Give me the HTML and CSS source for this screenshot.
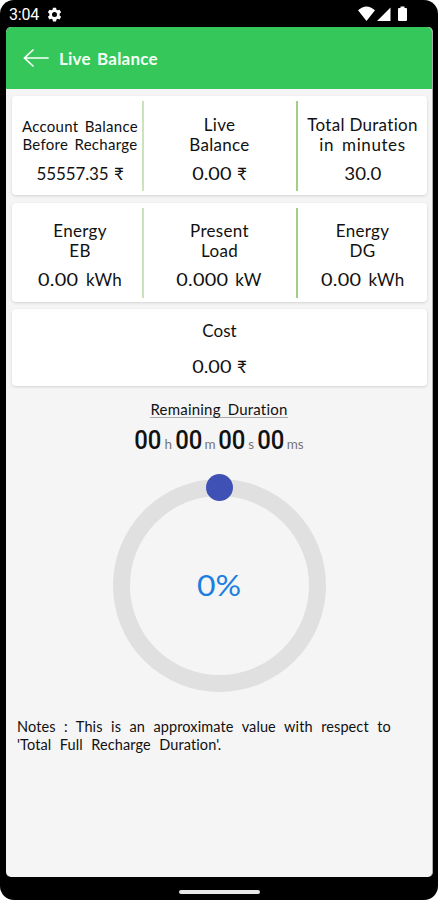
FILE: index.html
```html
<!DOCTYPE html>
<html lang="en">
<head>
<meta charset="utf-8">
<title>Live Balance</title>
<link rel="stylesheet" href="styles.css">
</head>
<body>
<div class="phone">
  <div class="status">
    <span class="clock">3:04</span>
    <svg class="gear" viewBox="0 0 24 24"><path fill="#fff" fill-rule="evenodd" d="M9.5 1h5l.6 3.2 2 1.100 3-1.100 2.500 4.200-2.400 2.200v2.800l2.400 2.200-2.500 4.200-3-1.100-2 1.100-.6 3.200h-5l-.6-3.200-2-1.100-3 1.100-2.500-4.200 2.400-2.200v-2.800L1.400 8.400l2.500-4.200 3 1.100 2-1.100zM12 8a4 4 0 1 0 0 8 4 4 0 0 0 0-8z"/></svg>
    <svg class="signals" viewBox="0 0 50 16"><path fill="#fff" d="M0 4.200Q8.500-3.400 17 4.200L8.500 15zM19 15 32.500 1.500V15zM40 3q0-1 1-1h1.500V.5h4V2H48q1 0 1 1v11q0 1-1 1h-7q-1 0-1-1z"/></svg>
  </div>
  <main class="screen">
    <header class="bar">
      <svg class="back" viewBox="0 0 26 20"><path d="M10 2 1.500 10l8.500 8M1.500 10H25" fill="none" stroke="#fff" stroke-width="1.700" stroke-linecap="round"/></svg>
      <h1>Live Balance</h1>
    </header>
    <section class="card trio">
      <div class="cell left"><p class="small">Account Balance<br>Before Recharge</p><p class="value amount">55557.35 ₹</p></div>
      <div class="cell mid"><p>Live<br>Balance</p><p class="value"><span class="wide">0.00</span> ₹</p></div>
      <div class="cell"><p>Total Duration<br><span class="minutes">in minutes</span></p><p class="value"><span class="wide minor">30.0</span></p></div>
    </section>
    <section class="card trio second">
      <div class="cell left"><p>Energy<br>EB</p><p class="value unit"><span class="wide">0.00</span> kWh</p></div>
      <div class="cell mid"><p>Present<br>Load</p><p class="value unit"><span class="wide">0.000</span> kW</p></div>
      <div class="cell"><p>Energy<br>DG</p><p class="value unit"><span class="wide">0.00</span> kWh</p></div>
    </section>
    <section class="card cost"><p>Cost</p><p class="value"><span class="wide">0.00</span> ₹</p></section>
    <h2><span>Remaining Duration</span></h2>
    <div class="timer"><b>00</b><i>h</i><b>00</b><i>m</i><b>00</b><i>s</i><b>00</b><i>ms</i></div>
    <div class="dial"><span class="knob"></span><span class="percent">0%</span></div>
    <p class="notes">Notes : This is an approximate value with respect to<br>'Total Full Recharge Duration'.</p>
  </main>
  <div class="home"></div>
</div>
</body>
</html>
```
FILE: styles.css
```css
* { box-sizing: border-box; }
body { margin: 0; background: #fff; font-family: Lato, "Noto Sans", sans-serif; color: #111; font-variant-ligatures: none; }
p, h1, h2 { margin: 0; font-weight: 400; }
.phone { width: 438px; height: 900px; background: #000; border-radius: 14px; overflow: hidden; display: flex; flex-direction: column; padding: 0 5px 0 6px; }
.status { height: 27px; flex: none; display: flex; align-items: center; padding: 1px 25px 0 3px; color: #fff; }
.clock { font: 400 16px/20px Roboto, sans-serif; letter-spacing: -.2px; margin-top: 1px; }
.gear { width: 15px; height: 15px; margin-left: 8px; }
.signals { width: 50px; height: 16px; margin-left: auto; }
.screen { height: 850px; flex: none; background: #f5f5f5; border-radius: 5px; overflow: hidden; border: solid #aaa; border-width: 0 1px 0 0; }
.bar { height: 62px; background: #35c759; display: flex; align-items: center; padding-left: 17px; border-radius: 5px 5px 0 0; }
.back { width: 26px; height: 20px; }
.bar h1 { font-size: 17px; font-weight: 700; color: #f4fff6; margin: 0 0 0 10px; letter-spacing: .2px; word-spacing: 2px; }
.card { background: #fff; margin: 7px 5px 0 6px; border-radius: 4px; box-shadow: 0 1px 3px rgba(0,0,0,.14); }
.trio { height: 99px; display: grid; grid-template-columns: 132px 154px 1fr; }
.cell { text-align: center; padding-top: 19px; position: relative; font-size: 17px; line-height: 20px; letter-spacing: .3px; }
.cell:not(:last-child)::after { content: ""; position: absolute; right: 0; top: 5px; width: 2px; height: 90px; background: #a4ce84; }
.cell.left::after { background: #cce2bd; }
.left { padding-left: 4px; }
.mid { padding-right: 3px; }
.value { font-size: 17px; line-height: 20px; margin-top: 9px; white-space: nowrap; letter-spacing: 0; word-spacing: 1px; }
.amount { letter-spacing: -.1px; }
.small { font-size: 15px; line-height: 18px; padding-top: 2px; margin-bottom: 11px; white-space: nowrap; word-spacing: 2px; }
.small + .value { margin-top: 0; }
.minutes { letter-spacing: .6px; word-spacing: 3px; }
.second { margin-top: 8px; }
.second .cell { padding-top: 18px; }
.wide { display: inline-block; transform: scaleX(1.170); margin: 0 3px; }
.minor { transform: scaleX(1.100); }
.unit { letter-spacing: .2px; word-spacing: 3px; }
.cost { height: 77px; text-align: center; padding-top: 12px; font-size: 17px; line-height: 20px; }
.cost .value { margin-top: 16px; }
h2 { text-align: center; font-size: 15px; line-height: 18px; margin-top: 14px; }
h2 span { display: inline-block; height: 18px; border-bottom: 1px solid #aaa; word-spacing: 3px; letter-spacing: .2px; }
.timer { display: flex; justify-content: center; align-items: baseline; margin-top: 7px; height: 30px; line-height: 30px; }
.timer b { font: 500 26px/30px Roboto, sans-serif; transform: scaleX(.920); margin: 0 -1px; }
.timer i { font-style: normal; font-size: 13.500px; color: #777; margin: 0 2.500px; }
.timer i:last-child { margin-right: 0; }
.dial { width: 213px; height: 213px; margin: 24px auto 0; border: 17px solid #e0e0e0; border-radius: 50%; display: flex; align-items: center; justify-content: center; position: relative; }
.knob { position: absolute; width: 27px; height: 27px; border-radius: 50%; background: #3f51b5; left: 76px; top: -22px; }
.percent { color: #1c7fe0; font-size: 29px; line-height: 32px; transform: scaleX(1.100); margin-top: -2px; }
.notes { font-size: 14.500px; line-height: 18px; margin: 26px 0 0 11px; white-space: nowrap; letter-spacing: .1px; word-spacing: 4.700px; }
.home { width: 81px; height: 4px; margin: 13px auto 0; background: #e8e8e8; border-radius: 2px; }
```
